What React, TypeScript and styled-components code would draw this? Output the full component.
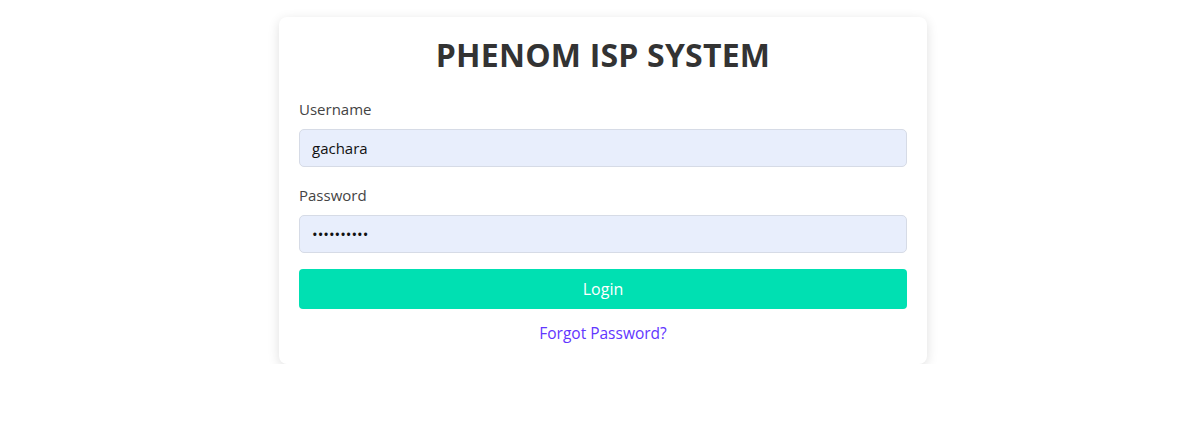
import React from "react";
import styled, { createGlobalStyle } from "styled-components";

const Global = createGlobalStyle`
  html, body { margin: 0; padding: 0; background: #ffffff; }
  body { font-family: "Open Sans", "Noto Sans", sans-serif; }
  * { box-sizing: border-box; }
`;

const Page = styled.div`
  display: flex;
  justify-content: center;
  padding: 17px 0 0 21px;
`;

const Card = styled.div`
  width: 648px;
  background: #fff;
  border-radius: 8px;
  box-shadow: 0 3px 12px rgba(0, 0, 0, 0.13);
  padding: 20px 20px 19px;
  display: flex;
  flex-direction: column;
`;

const Title = styled.h1`
  margin: 0;
  font-size: 32px;
  line-height: 36px;
  font-weight: 700;
  color: #333333;
  text-align: center;
  letter-spacing: 0.2px;
`;

const Field = styled.div<{ $top: number }>`
  display: flex;
  flex-direction: column;
  margin-top: ${(p) => p.$top}px;
`;

const Label = styled.label`
  font-size: 15px;
  line-height: 24px;
  color: #444444;
  margin-bottom: 8px;
`;

const Input = styled.input`
  height: 38px;
  width: 100%;
  border: 1px solid #d6dbe6;
  border-radius: 5px;
  background: #e8eefc;
  padding: 0 12px;
  font-family: "Open Sans", "Noto Sans", sans-serif;
  font-size: 15px;
  color: #111;
  outline: none;
`;

const Button = styled.button`
  margin-top: 16px;
  height: 40px;
  width: 100%;
  border: none;
  border-radius: 4px;
  background: #00e0b2;
  color: #ffffff;
  font-family: "Open Sans", "Noto Sans", sans-serif;
  font-size: 16px;
  cursor: pointer;
`;

const Forgot = styled.a`
  margin-top: 12px;
  align-self: center;
  font-size: 15.5px;
  line-height: 24px;
  color: #6236ff;
  text-decoration: none;
`;

export default function App() {
  return (
    <>
      <Global />
      <Page>
        <Card>
          <Title>PHENOM ISP SYSTEM</Title>
          <Field $top={24}>
            <Label>Username</Label>
            <Input type="text" defaultValue="gachara" />
          </Field>
          <Field $top={16}>
            <Label>Password</Label>
            <Input type="password" defaultValue="gachara123" />
          </Field>
          <Button>Login</Button>
          <Forgot href="#">Forgot Password?</Forgot>
        </Card>
      </Page>
    </>
  );
}
